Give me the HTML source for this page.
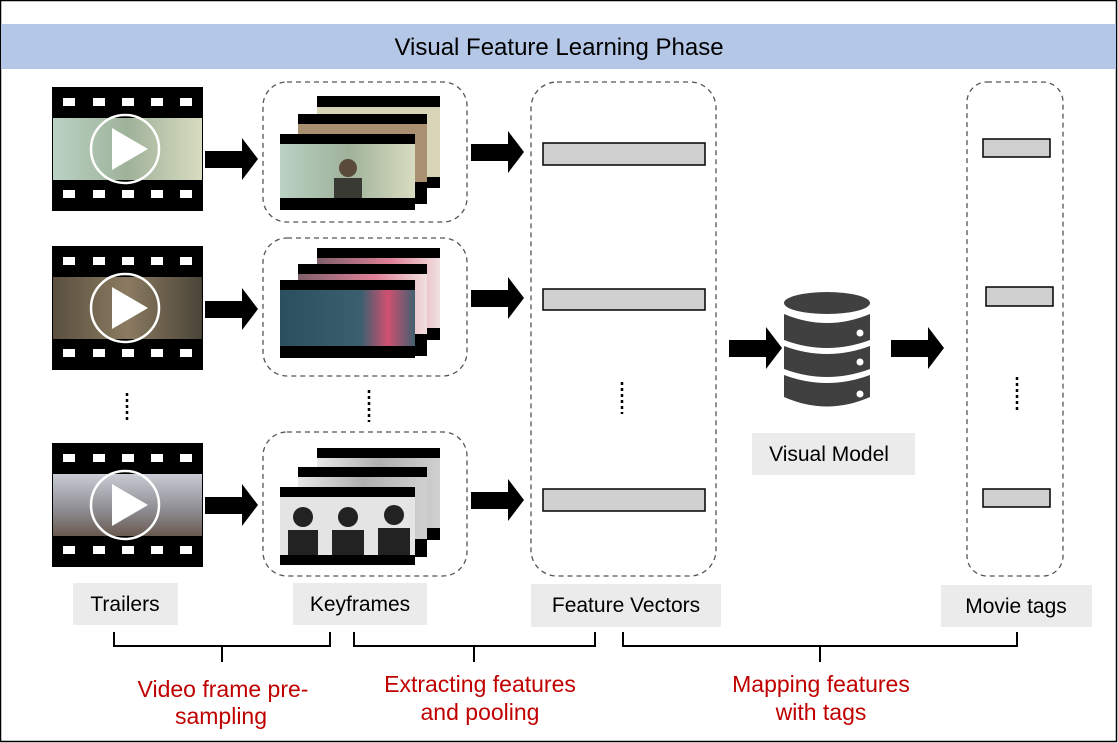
<!DOCTYPE html>
<html><head><meta charset="utf-8"><style>
html,body{margin:0;padding:0;background:#fff;}
svg{display:block;font-family:"Liberation Sans",Arial,sans-serif;}
</style></head><body>
<svg width="1118" height="743" viewBox="0 0 1118 743" xmlns="http://www.w3.org/2000/svg">
<defs>
<linearGradient id="g1" x1="0" x2="1"><stop offset="0" stop-color="#b9d2c4"/><stop offset="0.5" stop-color="#9fb29a"/><stop offset="1" stop-color="#d8dcc0"/></linearGradient>
<linearGradient id="g2" x1="0" x2="1"><stop offset="0" stop-color="#5a5040"/><stop offset="0.5" stop-color="#8a7a60"/><stop offset="1" stop-color="#4a4438"/></linearGradient>
<linearGradient id="g3" x1="0" y1="0" x2="0" y2="1"><stop offset="0" stop-color="#c8ccd4"/><stop offset="0.6" stop-color="#8c8a90"/><stop offset="1" stop-color="#6a5a50"/></linearGradient>
<linearGradient id="k2" x1="0" x2="1"><stop offset="0" stop-color="#2a5060"/><stop offset="0.6" stop-color="#3a6070"/><stop offset="0.8" stop-color="#d05070"/><stop offset="1" stop-color="#406070"/></linearGradient>
<linearGradient id="k2b" x1="0" x2="1"><stop offset="0" stop-color="#80606a"/><stop offset="0.6" stop-color="#e08098"/><stop offset="1" stop-color="#f0e0e0"/></linearGradient>
<linearGradient id="k3" x1="0" x2="1"><stop offset="0" stop-color="#e8e8e8"/><stop offset="0.5" stop-color="#b0b0b0"/><stop offset="1" stop-color="#d0d0d0"/></linearGradient>
<g id="arrow"><rect x="0" y="-8" width="38" height="17" fill="#000"/><polygon points="37,-21 53,0 37,21" fill="#000"/></g>
<g id="holes" fill="#fff"><rect x="63" y="98" width="12" height="8"/><rect x="93" y="98" width="12" height="8"/><rect x="122" y="98" width="12" height="8"/><rect x="151" y="98" width="12" height="8"/><rect x="180" y="98" width="12" height="8"/>
<rect x="63" y="190" width="12" height="8"/><rect x="93" y="190" width="12" height="8"/><rect x="122" y="190" width="12" height="8"/><rect x="151" y="190" width="12" height="8"/><rect x="180" y="190" width="12" height="8"/></g>
<g id="play"><circle cx="125" cy="149" r="34" fill="none" stroke="#fff" stroke-width="2.5"/>
<polygon points="112,128 148,149 112,170" fill="#fff"/></g>
</defs>
<rect x="0.5" y="0.5" width="1116" height="741" fill="#fff" stroke="#000" stroke-width="1.5"/>
<rect x="1" y="24" width="1115" height="45" fill="#b4c7e7"/>
<text x="559" y="55" font-size="24" text-anchor="middle" fill="#000">Visual Feature Learning Phase</text>

<rect x="52" y="87" width="151" height="124" fill="#000"/>
<rect x="53" y="118" width="149" height="62" fill="url(#g1)"/>
<use href="#holes"/><use href="#play"/>
<g transform="translate(0,159)">
<rect x="52" y="87" width="151" height="124" fill="#000"/>
<rect x="53" y="118" width="149" height="62" fill="url(#g2)"/>
<use href="#holes"/><use href="#play"/>
</g>
<g transform="translate(0,356)">
<rect x="52" y="87" width="151" height="124" fill="#000"/>
<rect x="53" y="118" width="149" height="62" fill="url(#g3)"/>
<use href="#holes"/><use href="#play"/>
</g>
<g stroke="#000" stroke-width="2.5" stroke-dasharray="3,3"><line x1="127" y1="393" x2="127" y2="421"/><line x1="369" y1="390" x2="369" y2="422"/><line x1="622" y1="382" x2="622" y2="414"/><line x1="1017" y1="377" x2="1017" y2="410"/></g>

<use href="#arrow" x="205" y="159"/>
<use href="#arrow" x="205" y="309"/>
<use href="#arrow" x="205" y="505"/>
<use href="#arrow" x="471" y="152"/>
<use href="#arrow" x="471" y="298"/>
<use href="#arrow" x="471" y="500"/>
<use href="#arrow" x="729" y="348"/>
<use href="#arrow" x="891" y="348"/>

<g fill="none" stroke="#555" stroke-width="1.3" stroke-dasharray="5,4">
<rect x="263" y="82" width="204" height="140" rx="24"/>
<rect x="263" y="238" width="204" height="138" rx="24"/>
<rect x="263" y="432" width="204" height="144" rx="24"/>
<rect x="531" y="82" width="185" height="494" rx="26"/>
<rect x="967" y="82" width="96" height="494" rx="20"/>
</g>
<g>
<rect x="317" y="96" width="123" height="92" fill="#000"/><rect x="317" y="107" width="123" height="70" fill="#d8d4b8"/>
<rect x="298" y="114" width="129" height="90" fill="#000"/><rect x="298" y="124" width="129" height="58" fill="#a89070"/>
<rect x="280" y="134" width="135" height="76" fill="#000"/><rect x="280" y="144" width="135" height="54" fill="url(#g1)"/>
<circle cx="348" cy="168" r="9" fill="#5a4a3a"/><rect x="334" y="178" width="28" height="20" fill="#3a3a34"/>
</g>
<g>
<rect x="317" y="248" width="123" height="92" fill="#000"/><rect x="317" y="258" width="123" height="70" fill="url(#k2b)"/>
<rect x="298" y="264" width="129" height="92" fill="#000"/><rect x="298" y="274" width="129" height="60" fill="url(#k2b)"/>
<rect x="280" y="280" width="135" height="78" fill="#000"/><rect x="280" y="290" width="135" height="56" fill="url(#k2)"/>
</g>
<g>
<rect x="317" y="448" width="123" height="92" fill="#000"/><rect x="317" y="458" width="123" height="70" fill="url(#k3)"/>
<rect x="298" y="467" width="129" height="90" fill="#000"/><rect x="298" y="477" width="129" height="62" fill="url(#k3)"/>
<rect x="280" y="487" width="135" height="78" fill="#000"/><rect x="280" y="497" width="135" height="58" fill="#e4e4e4"/>
<g fill="#222"><circle cx="303" cy="517" r="10"/><circle cx="348" cy="517" r="10"/><circle cx="394" cy="515" r="10"/><rect x="288" y="530" width="30" height="25"/><rect x="332" y="530" width="32" height="25"/><rect x="378" y="528" width="32" height="27"/></g>
</g>

<g fill="#d0d0d0" stroke="#000" stroke-width="1.5">
<rect x="543" y="143" width="162" height="22"/>
<rect x="543" y="289" width="162" height="21"/>
<rect x="543" y="489" width="162" height="22"/>
<rect x="983" y="139" width="67" height="18"/>
<rect x="986" y="287" width="67" height="19"/>
<rect x="983" y="489" width="67" height="18"/>
</g>

<g fill="#404040">
<ellipse cx="827" cy="303" rx="43" ry="11"/>
<path d="M784 314 Q827 332 870 314 L870 340 Q827 356 784 340 Z"/>
<path d="M784 346 Q827 362 870 346 L870 369 Q827 385 784 369 Z"/>
<path d="M784 375 Q827 391 870 375 L870 397 Q827 416 784 397 Z"/>
</g>
<g fill="#fff"><circle cx="860" cy="333" r="3.5"/><circle cx="860" cy="362" r="3.5"/><circle cx="860" cy="394" r="3.5"/></g>

<g fill="#ebebeb">
<rect x="752" y="433" width="163" height="42"/>
<rect x="73" y="583" width="105" height="42"/>
<rect x="293" y="583" width="134" height="42"/>
<rect x="531" y="584" width="190" height="43"/>
<rect x="941" y="585" width="151" height="42"/>
</g>
<g font-size="21" fill="#000" text-anchor="middle">
<text x="829" y="461">Visual Model</text>
<text x="125" y="611">Trailers</text>
<text x="360" y="611">Keyframes</text>
<text x="626" y="612">Feature Vectors</text>
<text x="1016" y="613">Movie tags</text>
</g>

<g fill="none" stroke="#000" stroke-width="2">
<path d="M114 632 V646 H330 V632 M222 646 V662"/>
<path d="M354 632 V646 H595 V632 M474 646 V662"/>
<path d="M623 632 V646 H1017 V632 M820 646 V662"/>
</g>
<g font-size="23" fill="#c00000" text-anchor="middle">
<text x="223" y="697">Video frame pre-</text>
<text x="221" y="724">sampling</text>
<text x="480" y="692">Extracting features</text>
<text x="480" y="720">and pooling</text>
<text x="821" y="692">Mapping features</text>
<text x="821" y="720">with tags</text>
</g>
</svg>
</body></html>
